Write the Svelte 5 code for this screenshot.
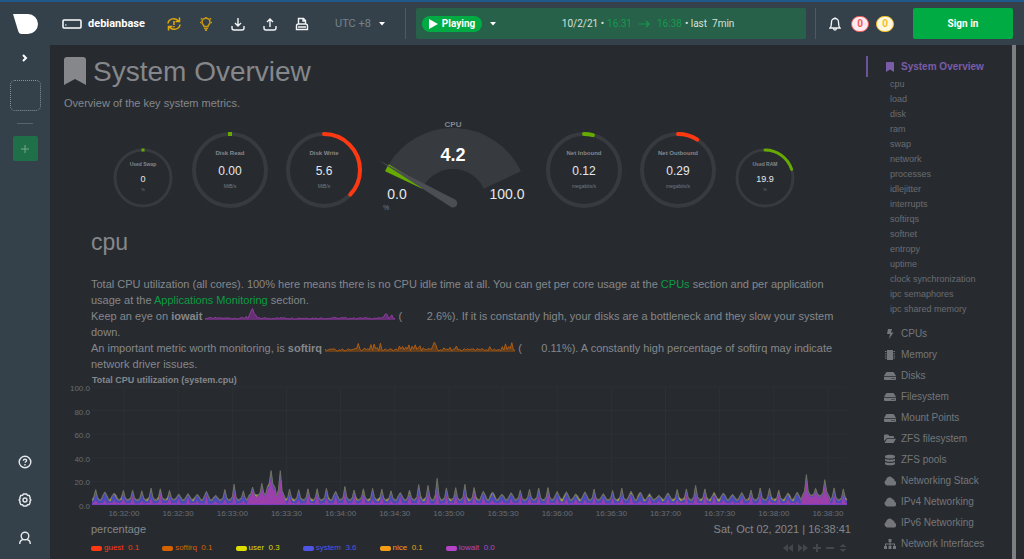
<script lang="ts">
  const small = { w: 74, h: 72, r: 28, stroke: 3, titleSize: 5, valueSize: 9, unitSize: 4, titleY: -12, valueY: 4, unitY: 13 };
  const large = { w: 88, h: 88, r: 36, stroke: 4, titleSize: 6, valueSize: 12, unitSize: 5, titleY: -15, valueY: 5, unitY: 18 };

  const left = [
    { title: "Used Swap", value: "0", unit: "%", pct: 0, color: "#66aa00", ...small },
    { title: "Disk Read", value: "0.00", unit: "MiB/s", pct: 0, color: "#66aa00", ...large },
    { title: "Disk Write", value: "5.6", unit: "MiB/s", pct: 37, color: "#fe3912", ...large },
  ];
  const right = [
    { title: "Net Inbound", value: "0.12", unit: "megabits/s", pct: 4, color: "#66aa00", ...large },
    { title: "Net Outbound", value: "0.29", unit: "megabits/s", pct: 9, color: "#fe3912", ...large },
    { title: "Used RAM", value: "19.9", unit: "%", pct: 20, color: "#66aa00", ...small },
  ];

  const submenu = [
    "cpu", "load", "disk", "ram", "swap", "network", "processes", "idlejitter", "interrupts", "softirqs",
    "softnet", "entropy", "uptime", "clock synchronization", "ipc semaphores", "ipc shared memory",
  ];
  const menu = [
    { icon: "bolt", label: "CPUs" },
    { icon: "chip", label: "Memory" },
    { icon: "hdd", label: "Disks" },
    { icon: "hdd", label: "Filesystem" },
    { icon: "hdd", label: "Mount Points" },
    { icon: "folder", label: "ZFS filesystem" },
    { icon: "database", label: "ZFS pools" },
    { icon: "cloud", label: "Networking Stack" },
    { icon: "cloud", label: "IPv4 Networking" },
    { icon: "cloud", label: "IPv6 Networking" },
    { icon: "sitemap", label: "Network Interfaces" },
  ];
  const icons: Record<string, string> = {
    bookmark: "M3 1h6a1 1 0 0 1 1 1v9l-4-2.500-4 2.500V2a1 1 0 0 1 1-1z",
    bolt: "M4 1h4L7 4.500h2.500L5 11l1-5H3z",
    chip: "M3 1h6v10H3zM1 2h1.500v1H1zM1 4.200h1.500v1H1zM1 6.400h1.500v1H1zM1 8.600h1.500v1H1zM9.500 2H11v1H9.500zM9.500 4.200H11v1H9.500zM9.500 6.400H11v1H9.500zM9.500 8.600H11v1H9.500z",
    hdd: "M3 2h6q.6 0 1 .6L12 6H0l2-3.400Q2.400 2 3 2zM0 6.800h12v2.200q0 1-1 1H1q-1 0-1-1zM7.500 8v1h1V8zM9.500 8v1h1V8z",
    folder: "M0 8V2.500Q0 1.500 1 1.500h3L5.500 3H9q1 0 1 1v1H3zM0.500 10L3 5.700h9L9.500 10z",
    database: "M1 2.200c0-2 10-2 10 0v1c0 1.700-10 1.700-10 0zM1 4.800c2 1.200 8 1.200 10 0v1.700c0 1.700-10 1.700-10 0zM1 8c2 1.200 8 1.200 10 0v1.800c0 2-10 2-10 0z",
    cloud: "M3 10.500a3 3 0 0 1-1-5.500 3.600 3.600 0 0 1 6.600-1.800 2.300 2.300 0 0 1 1.900 2.600 2.400 2.400 0 0 1-.5 4.700z",
    sitemap: "M4.500 1h3v3h-1v1.500H11V8h1v3H9V8h1V6.500H6.500V8h1v3h-3V8h1V6.500H2V8h1v3H0V8h1V5.500h4.500V4h-1z",
  };

  const legend = [
    { name: "guest", value: "0.1", color: "#fe3912" },
    { name: "softirq", value: "0.1", color: "#d66300" },
    { name: "user", value: "0.3", color: "#dddd00" },
    { name: "system", value: "3.6", color: "#5054e6" },
    { name: "nice", value: "0.1", color: "#f49d15" },
    { name: "iowait", value: "0.0", color: "#b644c8" },
  ];

  const times = [
    "16:32:00", "16:32:30", "16:33:00", "16:33:30", "16:34:00", "16:34:30", "16:35:00",
    "16:35:30", "16:36:00", "16:36:30", "16:37:00", "16:37:30", "16:38:00", "16:38:30",
  ];
  const yLabels = ["100.0", "80.0", "60.0", "40.0", "20.0", "0.0"];

  // height of the load spike in every five second window
  const peaks = [
    13, 11, 10, 12, 12, 12, 14, 13, 12, 9, 9, 9, 11, 8, 13, 17, 12, 15, 18, 29,
    29, 13, 13, 13, 13, 14, 11, 15, 12, 13, 14, 13, 12, 10, 12, 17, 16, 22, 14, 14,
    17, 14, 11, 11, 9, 10, 12, 13, 14, 14, 11, 11, 9, 11, 13, 9, 12, 14, 11, 11,
    9, 8, 10, 13, 13, 16, 13, 10, 10, 9, 10, 12, 14, 14, 12, 10, 11, 25, 14, 21,
    14, 13,
  ];

  const noise = (n: number) => {
    const v = Math.sin(n * 12.9898) * 43758.5453;
    return v - Math.floor(v);
  };

  const total: number[] = [];
  const user: number[] = [];
  const system: number[] = [];
  const iowait: number[] = [];
  peaks.forEach((peak, i) => {
    const busy = (i >= 17 && i <= 20) || (i >= 77 && i <= 79);
    const base = i === 19 ? 15 : busy ? 8 : 4.4;
    const side = peak < 12 ? 0.55 : 0.2;
    [0, side, 1, side, 0].forEach((k, j) => {
      const n = noise(i * 5 + j);
      const sum = base + (peak - base) * k + n * 0.8;
      total.push(sum);
      user.push(n > 0.85 ? sum : sum - 1);
      system.push(sum - (n > 0.85 ? 2 : 1));
      iowait.push(busy ? sum * 0.8 : k === 1 ? sum * (0.3 + n * 0.5) : 1 + n);
    });
  });

  const line = (vals: number[]) =>
    vals.map((v, i) => `${(28 + (i * 755) / (vals.length - 1)).toFixed(1)},${(119 - v * 1.18).toFixed(1)}`).join(" ");
  const area = (vals: number[]) => `28,119 ${line(vals)} 783,119`;

  function spark(seed: number, amp: number, bumps: Record<number, number>) {
    const pts: string[] = [];
    for (let i = 0; i <= 120; i++) {
      const h = 1 + noise(i + seed) * amp + (bumps[i] ?? 0);
      pts.push(`${((i * 190) / 120).toFixed(1)},${(12 - h).toFixed(1)}`);
    }
    return pts.join(" ");
  }
  const iowaitSpark = spark(7, 1.6, { 26: 2, 28: 3, 29: 6, 30: 9, 31: 5, 32: 3, 50: 1, 81: 1, 113: 2, 114: 4, 115: 3, 117: 2, 118: 3 });
  const softirqSpark = spark(90, 2.4, {
    20: 2, 21: 6, 22: 2, 25: 2, 29: 4, 31: 5, 33: 3, 35: 6, 47: 3, 49: 4, 51: 2, 53: 4, 55: 3, 57: 4, 59: 2, 60: 3,
    62: 3, 68: 4, 69: 8, 70: 4, 75: 2, 79: 2, 83: 3, 94: 2, 99: 2, 104: 2, 112: 3, 114: 5, 116: 4, 118: 6,
  });

  function polar(cx: number, cy: number, r: number, deg: number) {
    const a = (deg * Math.PI) / 180;
    return `${(cx + r * Math.cos(a)).toFixed(2)} ${(cy - r * Math.sin(a)).toFixed(2)}`;
  }
  function sector(from: number, to: number) {
    return `M${polar(79, 85, 75, from)}A75 75 0 0 1 ${polar(79, 85, 75, to)}L${polar(79, 85, 34, to)}A34 34 0 0 0 ${polar(79, 85, 34, from)}Z`;
  }
</script>

{#snippet ring(g: any)}
  <svg class="gauge" width={g.w} height={g.h} viewBox="{-g.w / 2} {-g.h / 2} {g.w} {g.h}">
    <circle class="ticks" r={g.r + 5} />
    <circle class="track" r={g.r} stroke-width={g.stroke} />
    {#if g.pct}
      <circle
        class="bar"
        r={g.r}
        stroke={g.color}
        stroke-width={g.stroke}
        pathLength="100"
        stroke-dasharray="{g.pct} 100"
        transform="rotate(-90)"
      />
    {:else}
      <rect x={-g.stroke / 2} y={-g.r - g.stroke / 2} width={g.stroke} height={g.stroke} fill={g.color} />
    {/if}
    <text class="gauge-title" y={g.titleY} font-size={g.titleSize}>{g.title}</text>
    <text class="gauge-value" y={g.valueY} font-size={g.valueSize}>{g.value}</text>
    <text class="gauge-unit" y={g.unitY} font-size={g.unitSize}>{g.unit}</text>
  </svg>
{/snippet}

<div class="app">
  <nav class="rail">
    <a class="logo" href="#home" aria-label="Home">
      <svg width="25" height="20" viewBox="0 0 25 20"><path fill="#fff" d="M0 0h15a10 10 0 0 1 0 20H8.500Q6 20 5.200 17z" /></svg>
    </a>
    <button class="expand" aria-label="Expand">
      <svg width="6" height="8" viewBox="0 0 6 8"><path d="M1 1l3 3-3 3" fill="none" stroke="#fff" stroke-width="2" /></svg>
    </button>
    <div class="space"></div>
    <hr />
    <button class="add" aria-label="Add space">
      <svg width="10" height="10" viewBox="0 0 10 10"><path d="M5 1v8M1 5h8" stroke="#75a58f" /></svg>
    </button>
    <div class="rail-bottom">
      <button aria-label="Help">
        <svg width="14" height="14" viewBox="0 0 14 14" fill="none" stroke="#e4e8eb" stroke-width="1.400">
          <circle cx="7" cy="7" r="5.800" />
          <path d="M5.300 5.700c.2-2 3.400-1.800 3.300 0 0 1-1.500 1.100-1.500 2.100M7 9v1.400" />
        </svg>
      </button>
      <button aria-label="Settings">
        <svg width="14" height="14" viewBox="0 0 14 14" fill="none" stroke="#e4e8eb" stroke-width="1.400">
          <path d="M5.500 1h3l1 1.300 1.700.2 1 2.200-.3 1 1 1.300-1 1.300.3 1-1 2.200-1.700.2-1 1.300h-3l-1-1.300-1.700-.2-1-2.200.3-1-1-1.300 1-1.300-.3-1 1-2.200 1.700-.2z" />
          <circle cx="7" cy="7" r="2" />
        </svg>
      </button>
      <button aria-label="Account">
        <svg width="14" height="14" viewBox="0 0 14 14" fill="none" stroke="#e4e8eb" stroke-width="1.400">
          <circle cx="7" cy="5" r="3.800" />
          <path d="M1.700 13c0-2.500 1.300-4 3.300-4.500M12.300 13c0-2.500-1.300-4-3.300-4.500" />
        </svg>
      </button>
    </div>
  </nav>

  <header>
    <div class="host">
      <svg width="20" height="10" viewBox="0 0 20 10">
        <rect x="1" y="1" width="18" height="8" rx="1" fill="none" stroke="#fff" stroke-width="1.500" />
        <path d="M3 6h1.500" stroke="#fff" />
      </svg>
      debianbase
    </div>
    <div class="tools">
      <button aria-label="Update needed">
        <svg width="14" height="14" viewBox="0 0 14 14" fill="none" stroke="#e0a90b" stroke-width="1.500">
          <path d="M1 6.500C1.500 1.500 8.500 0 11.500 4M12.500 .5V4.500H8.500M13 7.500C12.500 12.500 5.500 14 2.500 10M1.500 13.500V9.500H5.500M7 4v4M7 9v1.300" />
        </svg>
      </button>
      <button aria-label="News">
        <svg width="14" height="14" viewBox="0 0 14 14" fill="none" stroke="#c9970f" stroke-width="1.600">
          <path d="M5 9.500c0-1.500-2-2-2-4.300a4 4 0 0 1 8 0c0 2.300-2 2.800-2 4.300zM5 11.500h4M6 13.300h2" />
          <path d="M7 0v1M1 5.500h1M12 5.500h1M2 1.200l1 1M12 1.200l-1 1" />
        </svg>
      </button>
      <button aria-label="Import">
        <svg width="14" height="14" viewBox="0 0 14 14" fill="none" stroke="#f2f4f5" stroke-width="1.400">
          <path d="M7 1v8M4 6l3 3 3-3M1 9v2q0 2 2 2h8q2 0 2-2V9" />
        </svg>
      </button>
      <button aria-label="Export">
        <svg width="14" height="14" viewBox="0 0 14 14" fill="none" stroke="#f2f4f5" stroke-width="1.400">
          <path d="M7 10V2M4 5l3-3 3 3M1 9v2q0 2 2 2h8q2 0 2-2V9" />
        </svg>
      </button>
      <button aria-label="Print">
        <svg width="14" height="14" viewBox="0 0 14 14" fill="none" stroke="#f2f4f5" stroke-width="1.400">
          <path d="M3.500 7V1.500h5l2 2V7M8 1.500V4h2.500M1.500 12.500V9q0-2 2-2h7q2 0 2 2v3.500zM3 10h8" />
        </svg>
      </button>
    </div>
    <button class="timezone">
      UTC +8
      <svg width="6" height="5" viewBox="0 0 6 5"><path d="M0 1h6L3 4.500z" fill="#fff" /></svg>
    </button>
    <div class="picker">
      <button class="play">
        <svg width="9" height="10" viewBox="0 0 9 10"><path d="M0 0l9 5-9 5z" fill="#fff" /></svg>
        Playing
      </button>
      <button class="caret" aria-label="Play options">
        <svg width="6" height="5" viewBox="0 0 6 5"><path d="M0 1h6L3 4.500z" fill="#fff" /></svg>
      </button>
      <button class="range">
        10/2/21 • <span>16:31</span>
        <svg width="11" height="8" viewBox="0 0 11 8"><path d="M0 4h10M7 1l3 3-3 3" fill="none" stroke="#159a4c" stroke-width="1.200" /></svg>
        <span>16:38</span> • last&nbsp; 7min
      </button>
    </div>
    <div class="alerts">
      <button aria-label="Alerts">
        <svg width="12" height="14" viewBox="0 0 12 14" fill="none" stroke="#f2f4f5" stroke-width="1.300">
          <path d="M1 11c1-1 1.500-2 1.500-6a3.500 3.500 0 0 1 7 0c0 4 .5 5 1.500 6zM4.500 11.500c0 2 3 2 3 0M6 .3v1.200" />
        </svg>
      </button>
      <span class="badge critical">0</span>
      <span class="badge warning">0</span>
    </div>
    <button class="signin">Sign in</button>
  </header>

  <main>
    <article>
      <h1>
        <svg width="22" height="28" viewBox="0 0 22 28"><path d="M3 0h16q3 0 3 3v25l-11-6-11 6V3q0-3 3-3z" fill="currentColor" /></svg>
        System Overview
      </h1>
      <p class="lead">Overview of the key system metrics.</p>

      <div class="gauges">
        {#each left as g}
          {@render ring(g)}
        {/each}
        <svg class="gauge" width="160" height="96" viewBox="0 0 160 96">
          <path d={sector(150, 25)} fill="#373a3f" />
          <path d={sector(155, 149)} fill="#66aa00" />
          <path d="M4 42L81 81.500a4 4 0 0 1-4 7.500z" fill="#4b4e53" />
          <text class="gauge-title" x="79" y="9" font-size="8">CPU</text>
          <text class="gauge-main" x="79" y="43" font-size="18">4.2</text>
          <text class="gauge-value" x="23" y="81" font-size="14">0.0</text>
          <text class="gauge-value" x="133" y="81" font-size="14">100.0</text>
          <text class="gauge-unit" x="12" y="92" font-size="7">%</text>
        </svg>
        {#each right as g}
          {@render ring(g)}
        {/each}
      </div>

      <section>
        <h2>cpu</h2>
        <p>
          Total CPU utilization (all cores). 100% here means there is no CPU idle time at all. You can get per core usage at
          the <a href="#cpus">CPUs</a> section and per application usage at the
          <a href="#apps">Applications Monitoring</a> section.
        </p>
        <p>
          Keep an eye on <b>iowait</b>
          <svg class="spark" width="190" height="12" viewBox="0 0 190 12">
            <polygon points="0,12 {iowaitSpark} 190,12" fill="#643073" />
            <polyline points={iowaitSpark} fill="none" stroke="#8e3c9e" />
          </svg>
          (<span class="live">2.6</span>%). If it is constantly high, your disks are a bottleneck and they slow your system down.
        </p>
        <p>
          An important metric worth monitoring, is <b>softirq</b>
          <svg class="spark" width="190" height="12" viewBox="0 0 190 12">
            <polygon points="0,12 {softirqSpark} 190,12" fill="#62401f" />
            <polyline points={softirqSpark} fill="none" stroke="#b05c12" />
          </svg>
          (<span class="live">0.11</span>%). A constantly high percentage of softirq may indicate network driver issues.
        </p>
      </section>

      <div class="chart">
        <h3>Total CPU utilization (system.cpu)</h3>
        <svg class="plot" viewBox="0 0 787 132">
          {#each yLabels as label, i}
            <path class="grid" d="M28 {1 + i * 23.6}H783" />
            <text class="axis" x="26" y={5 + i * 23.6} text-anchor="end">{label}</text>
          {/each}
          {#each times as time, i}
            <path class="grid" d="M{60 + i * 54.15} 1V119" />
            <text class="axis" x={60 + i * 54.15} y="130" text-anchor="middle">{time}</text>
          {/each}
          <polygon points={area(total)} fill="#6b6c66" />
          <polygon points={area(user)} fill="#b0a428" />
          <polygon points={area(system)} fill="#4a4bb8" />
          <polygon points={area(iowait)} fill="#9b3fab" />
          <polyline points={line(total)} fill="none" stroke="#6e6e64" />
          <path d="M28 118.500H783" stroke="#7a3fc0" />
        </svg>
        <div class="info">
          <span>percentage</span>
          <time>Sat, Oct 02, 2021 | 16:38:41</time>
        </div>
        <div class="footer">
          <ul class="legend">
            {#each legend as item}
              <li style:color={item.color}>
                <i></i>{item.name}&nbsp; {item.value}
              </li>
            {/each}
          </ul>
          <div class="toolbox">
            <button aria-label="Back"><svg width="10" height="8" viewBox="0 0 10 8"><path d="M5 0v8L0 4zM10 0v8L5 4z" /></svg></button>
            <button aria-label="Forward"><svg width="10" height="8" viewBox="0 0 10 8"><path d="M0 0v8l5-4zM5 0v8l5-4z" /></svg></button>
            <button aria-label="Zoom in"><svg width="8" height="8" viewBox="0 0 8 8"><path d="M3 0h2v3h3v2H5v3H3V5H0V3h3z" /></svg></button>
            <button aria-label="Zoom out"><svg width="8" height="8" viewBox="0 0 8 8"><path d="M0 3h8v2H0z" /></svg></button>
            <button aria-label="Resize"><svg width="8" height="8" viewBox="0 0 8 8"><path d="M4 0l3.500 3h-7zM4 8L.5 5h7z" /></svg></button>
          </div>
        </div>
      </div>
    </article>

    <aside>
      <a class="item active" href="#overview">
        <svg width="12" height="12" viewBox="0 0 12 12"><path d={icons.bookmark} /></svg>
        System Overview
      </a>
      <ul class="submenu">
        {#each submenu as name}
          <li><a href="#{name.replaceAll(' ', '-')}">{name}</a></li>
        {/each}
      </ul>
      <ul class="menu">
        {#each menu as { icon, label }}
          <li>
            <a class="item" href="#{label.toLowerCase().replaceAll(' ', '-')}">
              <svg width="12" height="12" viewBox="0 0 12 12"><path d={icons[icon]} fill-rule="evenodd" /></svg>
              {label}
            </a>
          </li>
        {/each}
      </ul>
    </aside>
  </main>
</div>

<style>
  :global(body) {
    background: #272b30;
  }

  .app {
    display: grid;
    grid-template: 43px 1fr / 50px 1fr;
    box-sizing: border-box;
    height: 100vh;
    overflow: hidden;
    border-top: 2px solid #20598a;
    background: #35414a;
    font-family: "Liberation Sans", Arial, sans-serif;
    font-size: 11px;
    line-height: 16px;
    color: #85878b;
  }

  button {
    display: flex;
    align-items: center;
    padding: 0;
    border: none;
    background: none;
    color: inherit;
    font: inherit;
    cursor: pointer;
  }

  svg {
    flex: none;
  }

  ul {
    margin: 0;
    padding: 0;
    list-style: none;
  }

  a {
    color: #0a9c42;
    text-decoration: none;
  }

  .rail {
    grid-row: 1 / 3;
    display: flex;
    flex-direction: column;
    align-items: center;
    padding: 12px 0 14px;
  }

  .logo,
  .logo svg {
    display: block;
  }

  .expand {
    margin-top: 20px;
  }

  .space {
    width: 29px;
    height: 29px;
    margin-top: 18px;
    border: 1px dotted #84909a;
    border-radius: 5px;
  }

  hr {
    width: 16px;
    margin: 12px 0;
    border: none;
    border-top: 1px solid #55636d;
  }

  .add {
    justify-content: center;
    width: 25px;
    height: 25px;
    border-radius: 2px;
    background: #1f7049;
  }

  .rail-bottom {
    display: flex;
    flex-direction: column;
    gap: 24px;
    margin-top: auto;
  }

  header {
    display: flex;
    align-items: center;
    padding: 0 11px 0 12px;
    font-family: Roboto, sans-serif;
    font-size: 11px;
    color: #fff;
  }

  .host {
    display: flex;
    align-items: center;
    gap: 6px;
    width: 105px;
    font-weight: 700;
  }

  .tools {
    display: flex;
    gap: 18px;
  }

  .timezone {
    gap: 8px;
    margin-left: 26px;
    color: #75828a;
  }

  .picker {
    flex: 1;
    display: flex;
    align-items: center;
    box-sizing: border-box;
    height: 31px;
    margin: 0 9px 0 31px;
    padding: 0 6px;
    border-radius: 2px;
    background: #276149;
    position: relative;
  }

  .picker::before {
    content: "";
    position: absolute;
    left: -11px;
    height: 31px;
    border-left: 1px solid #4c5a64;
  }

  .play {
    gap: 4px;
    height: 16px;
    padding: 0 7px;
    border-radius: 8px;
    background: #00ab44;
    font-size: 10px;
    font-weight: 700;
  }

  .caret {
    margin-left: 8px;
  }

  .range {
    gap: 3px;
    margin: 0 auto;
    font-size: 10px;
    color: #d5e2dc;
  }

  .range span {
    color: #159a4c;
  }

  .range svg {
    margin: 0 4px;
  }

  .alerts {
    display: flex;
    align-items: center;
    gap: 7px;
    height: 31px;
    padding: 0 19px 0 13px;
    border-left: 1px solid #4c5a64;
  }

  .badge {
    width: 16px;
    border: 1px solid;
    border-radius: 9px;
    line-height: 14px;
    text-align: center;
    font-size: 10px;
    font-weight: 700;
  }

  .alerts button {
    margin-right: 3px;
  }

  .critical {
    background: #ffebef;
    color: #f05a5a;
  }

  .warning {
    background: #fff8e1;
    color: #f0c020;
  }

  .signin {
    justify-content: center;
    width: 100px;
    height: 31px;
    border-radius: 2px;
    background: #00ab44;
    font-size: 10px;
    font-weight: 700;
  }

  main {
    display: flex;
    min-height: 0;
    overflow: hidden;
    padding-right: 8px;
    background: #272b30;
  }

  article {
    flex: 1;
    min-width: 0;
    padding: 12px 15px 0 14px;
  }

  h1,
  h2,
  h3,
  p {
    margin: 0;
    font-weight: 400;
  }

  h1 {
    display: flex;
    gap: 7px;
    font-size: 28px;
    line-height: 30px;
  }

  .lead {
    margin: 8px 0 7px;
  }

  .gauges {
    display: flex;
    justify-content: center;
    align-items: flex-end;
    gap: 6px;
    padding-right: 8px;
  }

  .gauge {
    text-anchor: middle;
  }

  .ticks,
  .track,
  .bar {
    fill: none;
  }

  .ticks {
    stroke: #303439;
    stroke-dasharray: 1 7;
  }

  .track {
    stroke: #373a3f;
  }

  .bar {
    stroke-linecap: round;
  }

  .gauge-title {
    fill: #85878b;
    font-weight: 700;
  }

  .gauge-value {
    fill: #e6e7e8;
  }

  .gauge-main {
    fill: #fff;
    font-weight: 700;
  }

  .gauge-unit {
    fill: #777a7e;
  }

  section {
    padding: 0 4px 0 27px;
  }

  h2 {
    margin: 14px 0 20px;
    font-size: 23px;
    line-height: 28px;
  }

  .spark {
    overflow: visible;
    vertical-align: baseline;
  }

  .live {
    display: inline-block;
    width: 40px;
    text-align: right;
  }

  .chart {
    margin-top: 2px;
  }

  h3 {
    padding-left: 28px;
    font-size: 9px;
    font-weight: 700;
    line-height: 12px;
  }

  .plot {
    display: block;
    width: 100%;
    overflow: visible;
  }

  .grid {
    stroke: #2c3136;
  }

  .axis {
    fill: #696c70;
    font-size: 8px;
  }

  .info,
  .footer {
    display: flex;
    justify-content: space-between;
    align-items: center;
    padding-left: 27px;
    line-height: 14px;
  }

  .info {
    margin: 4px 0 5px;
  }

  .legend {
    display: flex;
    gap: 23px;
    font-size: 8px;
  }

  .legend li {
    display: flex;
    align-items: center;
  }

  .legend i {
    width: 11px;
    height: 5px;
    margin-right: 2px;
    border-radius: 2px;
    background: currentColor;
  }

  .toolbox {
    display: flex;
    gap: 5px;
    padding-right: 4px;
    fill: #43474c;
  }

  aside {
    flex: none;
    width: 146px;
    padding-top: 11px;
    border-right: 4px solid #7d7e80;
  }

  .item {
    display: flex;
    align-items: center;
    gap: 5px;
    padding-left: 18px;
    font-size: 10px;
    line-height: 21px;
    color: #74767a;
    fill: currentColor;
  }

  .active {
    padding-left: 16px;
    border-left: 2px solid #6b559a;
    font-weight: 700;
    color: #7b5ca8;
  }

  .submenu {
    padding-left: 24px;
    font-size: 9px;
    line-height: 15px;
  }

  .submenu a {
    color: #696c70;
  }

  .menu {
    margin-top: 6px;
  }
</style>
